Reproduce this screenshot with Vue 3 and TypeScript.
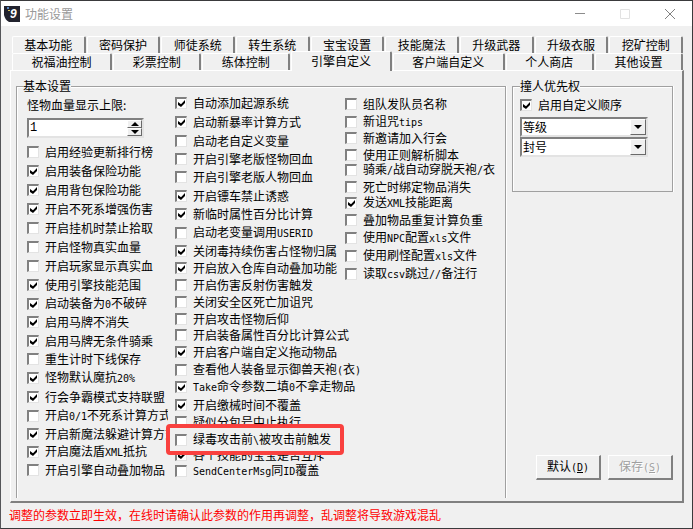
<script setup lang="ts">
import { ref } from 'vue'

interface Option {
  text: string
  on: boolean
  gap: number
  marked?: boolean
}

// gap: space above the row in pixels
function option(text: string, checked: 0 | 1, gap: number, marked = false): Option {
  return { text, on: checked === 1, gap, marked }
}

// Latin runs are half the width of a Chinese character
function runs(text: string): { value: string; latin: boolean }[] {
  return (text.match(/[\x20-\x7e]+|[^\x20-\x7e]+/g) ?? []).map((value) => ({
    value,
    latin: /^[\x20-\x7e]/.test(value),
  }))
}

const backTabs = ['基本功能', '密码保护', '师徒系统', '转生系统', '宝宝设置', '技能魔法', '升级武器', '升级衣服', '挖矿控制']
const frontTabs = ['祝福油控制', '彩票控制', '练体控制', '引擎自定义', '客户端自定义', '个人商店', '其他设置']
const activeTab = ref('引擎自定义')

const limit = ref('1')

const columns = ref<Option[][]>([
  [
    option('启用经验更新排行榜', 0, 0),
    option('启用装备保险功能', 1, 5),
    option('启用背包保险功能', 1, 5),
    option('开启不死系增强伤害', 1, 5),
    option('开启挂机时禁止拾取', 0, 5),
    option('开启怪物真实血量', 0, 5),
    option('开启玩家显示真实血', 0, 5),
    option('使用引擎技能范围', 1, 5),
    option('启动装备为0不破碎', 1, 5),
    option('启用马牌不消失', 1, 4),
    option('启用马牌无条件骑乘', 1, 5),
    option('重生计时下线保存', 0, 4),
    option('怪物默认魔抗20%', 1, 5),
    option('行会争霸模式支持联盟', 1, 5),
    option('开启0/1不死系计算方式', 0, 5),
    option('开启新魔法躲避计算方式', 1, 4),
    option('开启魔法盾XML抵抗', 1, 4),
    option('开启引擎自动叠加物品', 0, 4),
  ],
  [
    option('自动添加起源系统', 1, 0),
    option('启动新暴率计算方式', 1, 5),
    option('启动老自定义变量', 0, 5),
    option('开启引擎老版怪物回血', 0, 4),
    option('开启引擎老版人物回血', 0, 4),
    option('开启镖车禁止诱惑', 1, 5),
    option('新临时属性百分比计算', 1, 4),
    option('启动老变量调用USERID', 0, 5),
    option('关闭毒持续伤害占怪物归属', 1, 4),
    option('开启放入仓库自动叠加功能', 1, 3),
    option('开启伤害反射伤害触发', 0, 3),
    option('关闭安全区死亡加诅咒', 0, 3),
    option('开启攻击怪物后仰', 0, 3),
    option('开启装备属性百分比计算公式', 0, 2),
    option('开启客户端自定义拖动物品', 1, 3),
    option('查看他人装备显示御兽天袍(衣)', 0, 4),
    option('Take命令参数二填0不拿走物品', 1, 3),
    option('开启缴械时间不覆盖', 1, 4),
    option('疑似分包号中止执行', 0, 3),
    option('绿毒攻击前\\被攻击前触发', 0, 4, true),
    option('各个技能的宝宝是否互斥', 1, 1),
    option('SendCenterMsg同ID覆盖', 0, 2),
  ],
  [
    option('组队发队员名称', 0, 1),
    option('新诅咒tips', 0, 4),
    option('新邀请加入行会', 0, 2),
    option('使用正则解析脚本', 0, 3),
    option('骑乘/战自动穿脱天袍/衣', 0, 1),
    option('死亡时绑定物品消失', 0, 3),
    option('发送XML技能距离', 1, 2),
    option('叠加物品重复计算负重', 0, 3),
    option('使用NPC配置xls文件', 0, 4),
    option('使用刷怪配置xls文件', 0, 4),
    option('读取csv跳过//备注行', 0, 4),
  ],
])

const customOrder = ref(true)
const priorities = ref(['等级', '封号'])
const names = ['等级', '封号']

function step(by: number): void {
  limit.value = String(Number(limit.value) + by)
}
</script>

<template>
  <main class="window">
    <header class="titlebar">
      <svg class="logo" width="16" height="16" viewBox="0 0 16 16" aria-hidden="true">
        <path d="M0 0H16V16H5Q1 14 0 9Z" fill="#22232e" />
        <path d="M3 1H5V3H3Z" fill="#5b8ac4" />
        <path d="M4 4H6V5H4Z" fill="#d9c25a" />
        <text x="6" y="12" class="logo-mark">9</text>
      </svg>
      <h1>功能设置</h1>
      <div class="caption">
        <button type="button" aria-label="最小化">
          <svg width="10" height="10" viewBox="0 0 10 10"><path d="M0 4.5H10" stroke="#8c8c8c" /></svg>
        </button>
        <button type="button" aria-label="最大化" disabled>
          <svg width="10" height="10" viewBox="0 0 10 10"><path d="M.5 .5H9.5V9.5H.5Z" fill="none" stroke="#e2e2e2" /></svg>
        </button>
        <button type="button" aria-label="关闭">
          <svg width="10" height="10" viewBox="0 0 10 10"><path d="M0 0L10 10M10 0L0 10" stroke="#808080" /></svg>
        </button>
      </div>
    </header>

    <div class="client">
      <nav class="tabs">
        <div class="tab-row back">
          <button v-for="tab in backTabs" :key="tab" type="button" class="tab">{{ tab }}</button>
        </div>
        <div class="tab-row front">
          <button
            v-for="tab in frontTabs"
            :key="tab"
            type="button"
            class="tab"
            :class="{ active: tab === activeTab }"
            @click="activeTab = tab"
          >{{ tab }}</button>
        </div>
      </nav>

      <section class="panel">
        <fieldset class="group basic">
          <legend>基本设置</legend>
          <div class="columns">
            <div v-for="(column, c) in columns" :key="c" class="column" :class="'column-' + c">
              <div v-if="c === 0" class="limit">
                <label for="limit">怪物血量显示上限:</label>
                <div class="spin">
                  <input id="limit" v-model="limit" type="text" />
                  <div class="spin-buttons">
                    <button type="button" aria-label="增加" @click="step(1)">
                      <svg width="8" height="4" viewBox="0 0 8 4"><path d="M4 0L8 4H0Z" /></svg>
                    </button>
                    <button type="button" aria-label="减少" @click="step(-1)">
                      <svg width="8" height="4" viewBox="0 0 8 4"><path d="M0 0H8L4 4Z" /></svg>
                    </button>
                  </div>
                </div>
              </div>
              <label
                v-for="item in column"
                :key="item.text"
                class="check"
                :class="['gap-' + item.gap, { marked: item.marked }]"
              >
                <input v-model="item.on" type="checkbox" />
                <span><span v-for="(run, r) in runs(item.text)" :key="r" :class="{ latin: run.latin }">{{ run.value }}</span></span>
              </label>
            </div>
          </div>
        </fieldset>

        <div class="side">
          <fieldset class="group order">
            <legend>撞人优先权</legend>
            <label class="check">
              <input v-model="customOrder" type="checkbox" />
              <span>启用自定义顺序</span>
            </label>
            <div class="combos">
              <div v-for="(_, p) in priorities" :key="p" class="combo">
                <select v-model="priorities[p]" :aria-label="'优先权' + (p + 1)">
                  <option v-for="name in names" :key="name">{{ name }}</option>
                </select>
                <span class="drop">
                  <svg width="8" height="4" viewBox="0 0 8 4"><path d="M0 0H8L4 4Z" /></svg>
                </span>
              </div>
            </div>
          </fieldset>

          <div class="actions">
            <button type="button">默认<span class="latin">(<u>D</u>)</span></button>
            <button type="button" disabled>保存<span class="latin">(<u>S</u>)</span></button>
          </div>
        </div>
      </section>

      <p class="notice">调整的参数立即生效，在线时请确认此参数的作用再调整，乱调整将导致游戏混乱</p>
    </div>
  </main>
</template>

<style>
body {
  margin: 0;
  background: #f0f0f0;
}
</style>

<style scoped>
*,
*::before {
  box-sizing: border-box;
}

.window {
  display: flex;
  flex-direction: column;
  min-height: 100vh;
  border: 1px solid #3a3a3c;
  border-left-color: #55565a;
  background: #f0f0f0;
  color: #000;
  font: 12px/14px "Noto Sans CJK SC", sans-serif;
}

button,
input,
select {
  margin: 0;
  padding: 0;
  border: 0;
  border-radius: 0;
  background: none;
  color: inherit;
  font: inherit;
}

svg {
  display: block;
}

.latin {
  font-family: "DejaVu Sans Mono", monospace;
  font-size: 10px;
}

.titlebar {
  display: flex;
  align-items: center;
  height: 25px;
  padding-left: 3px;
  background: #fff;
}

.logo-mark {
  fill: #fff;
  font: italic bold 12px "Liberation Sans", sans-serif;
}

h1 {
  margin: 0 0 0 5px;
  color: #999;
  font-size: 12px;
  font-weight: 400;
}

.caption {
  display: flex;
  margin-left: auto;
}

.caption button {
  display: grid;
  place-items: center;
  width: 45px;
  height: 25px;
}

.client {
  display: flex;
  flex: 1;
  flex-direction: column;
  padding: 10px 8px 6px 8px;
}

.tabs {
  padding: 0 1px 0 3px;
}

.tab-row {
  display: flex;
  align-items: flex-end;
  gap: 1px;
}

.tab {
  flex: 1 1 auto;
  height: 17px;
  border-top: 1px solid #fff;
  border-left: 1px solid #fff;
  border-right: 2px solid #808080;
  border-radius: 2px 2px 0 0;
  line-height: 16px;
  white-space: nowrap;
}

.tab.active {
  height: 20px;
  margin: -3px 0 -1px;
  padding-bottom: 2px;
  background: #f0f0f0;
}

.front .tab {
  position: relative;
}

.panel {
  display: flex;
  flex: 1;
  gap: 6px;
  margin-left: 1px;
  padding: 8px 9px 3px 5px;
  border: 1px solid #fff;
  border-right: 2px solid #808080;
  border-bottom: 2px solid #808080;
}

.group {
  min-width: 0;
  margin: 0;
  border: 1px solid #a0a0a0;
  box-shadow: inset 1px 1px #fff, 1px 0 #fff;
}

.group legend {
  padding: 0;
  background: #f0f0f0;
}

.basic {
  flex: 1;
  padding: 3px 8px 19px 10px;
  border-bottom: 0;
}

.basic legend {
  margin-left: -4px;
}

.columns {
  display: flex;
}

.column {
  flex: 0 0 auto;
  min-width: 0;
}

.column-0 {
  width: 141px;
  margin-right: 7px;
  padding-top: 2px;
  overflow: hidden;
}

.column-1 {
  width: 170px;
}

.limit {
  margin-bottom: 7px;
}

.limit label {
  display: block;
}

.spin {
  display: flex;
  width: 117px;
  height: 20px;
  margin-top: 6px;
  border: 2px solid #808080;
  border-right-color: #e3e3e3;
  border-bottom-color: #e3e3e3;
  background: #fff;
}

.spin input {
  flex: 1;
  min-width: 0;
  padding-left: 1px;
  outline: 0;
  font: 12px/14px "Liberation Mono", monospace;
}

.spin-buttons {
  display: flex;
  flex-direction: column;
  width: 15px;
}

.spin-buttons button,
.drop {
  display: grid;
  place-items: center;
  border: 1px solid #fff;
  border-right-color: #696969;
  border-bottom-color: #696969;
  background: #f0f0f0;
}

.spin-buttons button {
  height: 8px;
}

.check {
  display: flex;
  align-items: center;
  gap: 6px;
  height: 14px;
  white-space: nowrap;
}

.check input {
  flex: none;
  display: grid;
  place-items: center;
  width: 12px;
  height: 12px;
  appearance: none;
  border: 2px solid #808080;
  border-right: 1px solid #e3e3e3;
  border-bottom: 1px solid #e3e3e3;
  background: #fff;
}

.check input:checked::before {
  content: "";
  width: 7px;
  height: 7px;
  background: #000;
  clip-path: polygon(0 29%, 43% 62%, 100% 0, 100% 43%, 43% 100%, 0 71%);
}

.gap-1 { margin-top: 1px; }
.gap-2 { margin-top: 2px; }
.gap-3 { margin-top: 3px; }
.gap-4 { margin-top: 4px; }
.gap-5 { margin-top: 5px; }

/* highlighted row: the frame lies over its neighbours */
.marked {
  position: relative;
  z-index: 1;
}

.marked::before {
  content: "";
  position: absolute;
  z-index: -1;
  top: -9px;
  left: -9px;
  width: 178px;
  height: 31px;
  border: 4px solid #f9413f;
  border-radius: 4px;
  background: #f0f0f0;
}

.side {
  display: flex;
  flex: 0 0 161px;
  flex-direction: column;
}

.order {
  padding: 5px 7px 34px;
}

.combos {
  width: 128px;
  margin-top: 5px;
}

.combo {
  position: relative;
  height: 20px;
}

.combo select {
  width: 100%;
  height: 20px;
  padding-left: 1px;
  appearance: none;
  border: 2px solid #808080;
  border-right-color: #e3e3e3;
  border-bottom-color: #e3e3e3;
  background: #fff;
}

.drop {
  position: absolute;
  top: 2px;
  right: 2px;
  width: 16px;
  height: 16px;
  pointer-events: none;
}

.actions {
  display: flex;
  justify-content: flex-end;
  gap: 7px;
  margin: auto 0 18px;
}

.actions button {
  width: 65px;
  height: 25px;
  border: 1px solid #fff;
  border-right: 2px solid #808080;
  border-bottom: 2px solid #808080;
}

.actions button:disabled {
  color: #a0a0a0;
  text-shadow: 1px 1px #fff;
}

.notice {
  margin: 5px 0 0;
  color: #f00;
}
</style>
